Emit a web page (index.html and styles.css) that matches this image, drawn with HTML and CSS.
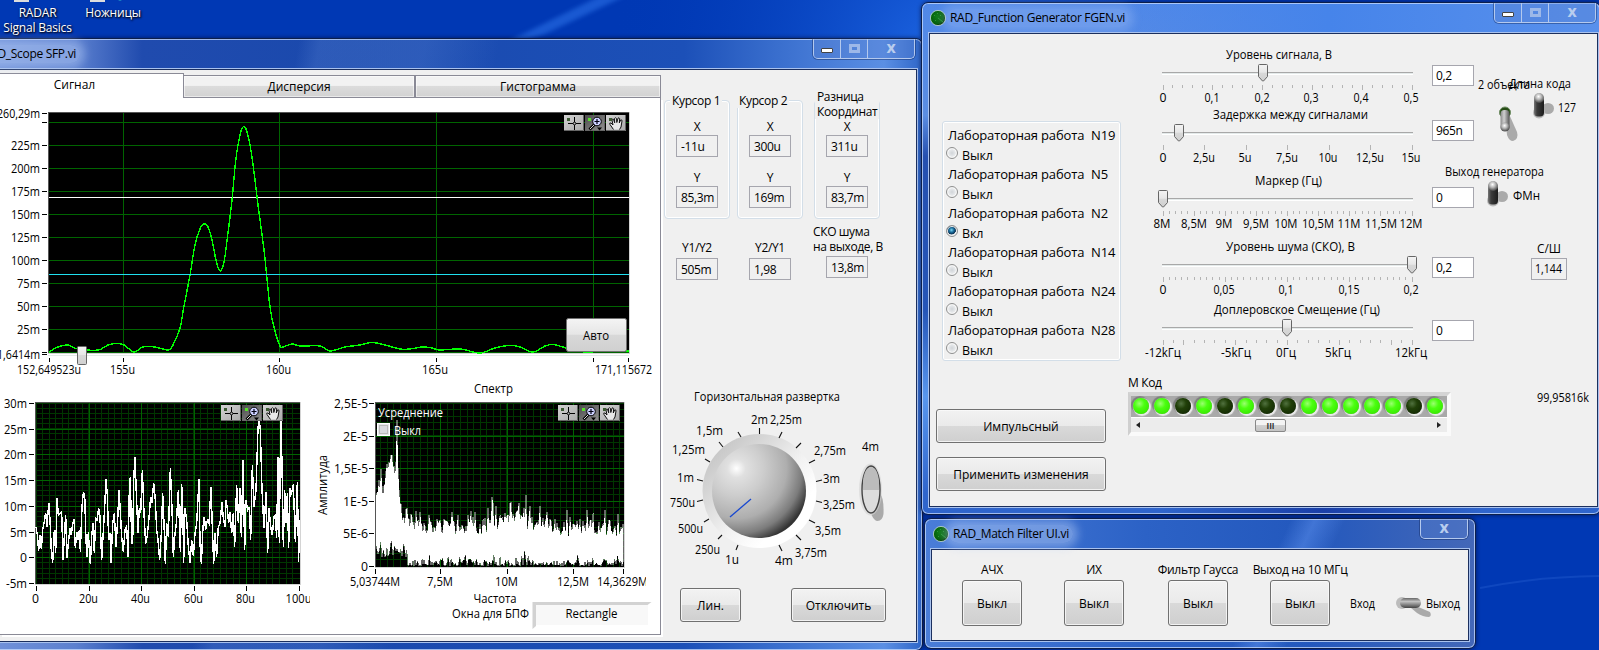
FILE: index.html
```html
<!DOCTYPE html>
<html lang="ru">
<head>
<meta charset="utf-8">
<title>RAD</title>
<link rel="stylesheet" href="styles.css">
</head>
<body>
<svg class="wallpaper" viewBox="0 0 1599 650" aria-hidden="true">
  <defs>
    <radialGradient id="glow" gradientUnits="userSpaceOnUse" cx="950" cy="60" r="340"><stop offset="0" stop-color="#2069e6"/><stop offset="1" stop-color="#0038b5" stop-opacity="0"/></radialGradient>
    <filter id="soft" x="-20%" y="-50%" width="140%" height="200%"><feGaussianBlur stdDeviation="2"/></filter>
    <linearGradient id="btn" x2="0" y2="1"><stop offset="0" stop-color="#f4f4f4"/><stop offset=".48" stop-color="#e6e6e6"/><stop offset=".5" stop-color="#d8d8d8"/><stop offset="1" stop-color="#d0d0d0"/></linearGradient>
    <linearGradient id="toolUp" x2="1" y2="1"><stop offset="0" stop-color="#d2d2d2"/><stop offset="1" stop-color="#aaa"/></linearGradient>
    <linearGradient id="toolDown" x2="1" y2="1"><stop offset="0" stop-color="#4c4c4c"/><stop offset="1" stop-color="#929292"/></linearGradient>
    <radialGradient id="knob" cx=".26" cy=".26" r=".82"><stop offset="0" stop-color="#fff"/><stop offset=".12" stop-color="#e0e0e0"/><stop offset=".35" stop-color="#cdcdcd"/><stop offset=".65" stop-color="#aeaeae"/><stop offset=".85" stop-color="#7c7c7c"/><stop offset="1" stop-color="#333"/></radialGradient>
    <linearGradient id="bezel" x1=".1" y1=".1" x2=".9" y2=".9"><stop offset="0" stop-color="#c4c4c4"/><stop offset=".3" stop-color="#dcdcdc"/><stop offset=".55" stop-color="#f2f2f2"/><stop offset=".8" stop-color="#fff"/></linearGradient>
    <linearGradient id="rod" x2="1"><stop offset="0" stop-color="#777"/><stop offset=".3" stop-color="#3c3c3c"/><stop offset="1" stop-color="#1c1c1c"/></linearGradient>
    <linearGradient id="rodLight" x2="1"><stop offset="0" stop-color="#8a8a8a"/><stop offset=".4" stop-color="#d0d0d0"/><stop offset="1" stop-color="#555"/></linearGradient>
    <linearGradient id="rodSide" x2="0" y2="1"><stop offset="0" stop-color="#666"/><stop offset=".35" stop-color="#c0c0c0"/><stop offset="1" stop-color="#444"/></linearGradient>
    <radialGradient id="ball" cx=".45" cy=".35" r=".6"><stop offset="0" stop-color="#fff"/><stop offset=".5" stop-color="#b5b5b5"/><stop offset="1" stop-color="#555"/></radialGradient>
    <radialGradient id="radar" cx=".4" cy=".4" r=".6"><stop offset="0" stop-color="#0b7a14"/><stop offset=".8" stop-color="#045c0a"/><stop offset="1" stop-color="#022c05"/></radialGradient>
  </defs>
  <rect width="1599" height="650" fill="#0038b4"/>
  <rect width="1599" height="650" fill="url(#glow)"/>
  <path d="M470 60 545 34 625 -4 600 -4Z" fill="#2f74ea" opacity=".55" filter="url(#soft)"/>
  <path d="M1480 588q60-12 125-12" fill="none" stroke="#2660d0" stroke-width="2" opacity=".4"/>
  <rect x="14" y="-4" width="15" height="6" fill="#ddd"/><rect x="90" y="-4" width="15" height="6" fill="#ddd"/><path d="M116 -1h8l-4 2z" fill="#1d8fc4"/>
</svg>

<div class="shortcuts">
  <div class="shortcut first">RADAR<br>Signal Basics</div>
  <div class="shortcut">Ножницы</div>
</div>

<section class="window scope">
  <header class="titlebar"><span class="title">RAD_Scope SFP.vi</span>
    <div class="caption"><i class="cap min"></i><i class="cap max"></i><i class="cap close">x</i></div>
  </header>
  <div class="client scope-client">
    <div class="tabs">
      <nav class="tabbar"><span class="tab active">Сигнал</span><span class="tab second">Дисперсия</span><span class="tab third">Гистограмма</span></nav>
      <div class="page">
        <svg id="signal" viewBox="0 98 660 280" width="660" height="280"></svg>
        <div class="lower">
          <svg id="noise" viewBox="0 378 310 256" width="310" height="256"></svg>
          <svg id="spectrum" viewBox="310 378 350 256" width="350" height="256"></svg>
        </div>
      </div>
    </div>
    <aside class="readouts">
      <div class="cursors">
        <div class="group"><b class="legend">Курсор 1</b><span class="lbl">X</span><output class="val">-11u</output><span class="lbl low">Y</span><output class="val">85,3m</output></div>
        <div class="group two"><b class="legend">Курсор 2</b><span class="lbl">X</span><output class="val">300u</output><span class="lbl low">Y</span><output class="val">169m</output></div>
        <div class="group three"><b class="legend">Разница<br>Координат</b><span class="lbl">X</span><output class="val">311u</output><span class="lbl low">Y</span><output class="val">83,7m</output></div>
      </div>
      <div class="ratios">
        <div class="ratio"><span class="lbl">Y1/Y2</span><output class="val">505m</output></div>
        <div class="ratio second"><span class="lbl">Y2/Y1</span><output class="val">1,98</output></div>
        <div class="ratio third"><span class="lbl">СКО шума<br>на выходе, В</span><output class="val">13,8m</output></div>
      </div>
      <svg id="dial" viewBox="663 385 252 203" width="252" height="203"></svg>
      <div class="actions"><button class="btn lin">Лин.</button><button class="btn off">Отключить</button></div>
    </aside>
  </div>
</section>

<section class="window fgen">
  <header class="titlebar"><svg class="appicon" viewBox="0 0 16 16"><circle cx="8" cy="8" r="7.6" fill="url(#radar)" stroke="#d8ecd8" stroke-width=".7"/><path d="M8 8l5 4M4 5l1 1M7 3l1 1M5 10l1 1M10 6l1-1" stroke="#2fa03a" stroke-width=".8"/></svg><span class="title">RAD_Function Generator FGEN.vi</span>
    <div class="caption"><i class="cap min"></i><i class="cap max"></i><i class="cap close">x</i></div>
  </header>
  <div class="client fgen-client">
    <div class="labs-col">
      <div class="labs">
        <div class="lab"><span>Лабораторная работа</span><span>N19</span><label><i class="radio"></i>Выкл</label></div>
        <div class="lab"><span>Лабораторная работа</span><span>N5</span><label><i class="radio"></i>Выкл</label></div>
        <div class="lab"><span>Лабораторная работа</span><span>N2</span><label><i class="radio on"></i>Вкл</label></div>
        <div class="lab"><span>Лабораторная работа</span><span>N14</span><label><i class="radio"></i>Выкл</label></div>
        <div class="lab"><span>Лабораторная работа</span><span>N24</span><label><i class="radio"></i>Выкл</label></div>
        <div class="lab"><span>Лабораторная работа</span><span>N28</span><label><i class="radio"></i>Выкл</label></div>
      </div>
      <button class="btn wide">Импульсный</button>
      <button class="btn wide">Применить изменения</button>
    </div>
    <div class="controls">
      <div id="sliders"></div>
      <div class="mcode"><span class="mlabel">М Код</span>
        <div class="array"><div class="leds" id="leds"></div><div class="scroll"><i class="arrow left"></i><i class="thumb">III</i><i class="arrow"></i></div></div>
      </div>
    </div>
    <svg class="switches" id="switches" viewBox="1440 34 156 380" width="156" height="380"></svg>
  </div>
</section>

<section class="window filter">
  <header class="titlebar"><svg class="appicon" viewBox="0 0 16 16"><circle cx="8" cy="8" r="7.6" fill="url(#radar)" stroke="#d8ecd8" stroke-width=".7"/><path d="M8 8l5 4M4 5l1 1M7 3l1 1M5 10l1 1M10 6l1-1" stroke="#2fa03a" stroke-width=".8"/></svg><span class="title">RAD_Match Filter UI.vi</span>
    <div class="caption"><i class="cap close">x</i></div>
  </header>
  <div class="client filter-client">
    <div class="cell"><span class="lbl">АЧХ</span><button class="btn sq">Выкл</button></div>
    <div class="cell"><span class="lbl">ИХ</span><button class="btn sq">Выкл</button></div>
    <div class="cell"><span class="lbl">Фильтр Гаусса</span><button class="btn sq">Выкл</button></div>
    <div class="cell"><span class="lbl">Выход на 10 МГц</span><button class="btn sq">Выкл</button></div>
    <svg id="route" viewBox="1346 580 120 46" width="120" height="46"></svg>
  </div>
</section>
<script src="panel.js"></script>
</body>
</html>
```
FILE: styles.css
```css
*, *::after { box-sizing: border-box; }
body { margin: 0; width: 1599px; height: 650px; overflow: hidden; position: relative; background: #0038b4; color: #000; font: 12px/15px "Open Sans", "Noto Sans", sans-serif; letter-spacing: -.35px; }
svg { display: block; }
svg text { font: 12px "Open Sans", "Noto Sans", sans-serif; letter-spacing: 0; }
i { font-style: normal; }
.wallpaper { position: absolute; inset: 0; width: 1599px; height: 650px; }

.shortcuts { position: absolute; left: 0; top: 5px; display: flex; color: #fff; text-align: center; text-shadow: 1px 1px 2px #000, 0 1px 2px #001a60; }
.shortcut { width: 76px; white-space: nowrap; letter-spacing: -.2px; }
.shortcut.first { width: 75px; }

/* Glass window frames */
.window { position: absolute; border: 1px solid #0d1f4a; border-radius: 7px; box-shadow: inset 0 0 0 1px rgba(200,220,255,.75), 0 0 4px rgba(0,0,30,.6); }
.titlebar { height: 30px; display: flex; align-items: center; position: relative; }
.title { line-height: 16px; padding: 1px 4px; margin-left: 0; letter-spacing: -.3px; white-space: nowrap; border-radius: 9px; background: rgba(190,212,250,.42); box-shadow: 0 0 9px 5px rgba(190,212,250,.42); }
.fgen .title { background: rgba(190,212,250,.25); box-shadow: 0 0 9px 5px rgba(190,212,250,.25); }
.appicon { width: 16px; height: 16px; }
.client { background: #f0f0f0; border: 1px solid #1b2f5e; box-shadow: 0 0 0 1px #a9c2ee; overflow: hidden; }
.caption { position: absolute; top: 0; display: flex; height: 20px; border: 1px solid #b4c9ee; border-top: 0; border-radius: 0 0 5px 5px; box-shadow: 0 0 0 1px rgba(20,45,100,.45); }
.cap { width: 27px; border-right: 1px solid #b4c9ee; position: relative; display: flex; justify-content: center; align-items: center; background: rgba(90,130,210,.35); }
.cap:last-child { border: 0; border-radius: 0 0 4px 4px; }
.cap.close { width: 46px; color: #b9cdee; font: bold 16px/16px "Open Sans", sans-serif; padding-bottom: 3px; }
.cap.min::after { content: ""; width: 12px; height: 5px; background: #fff; border: 1px solid #444; border-radius: 1px; margin-top: 3px; }
.cap.max::after { content: ""; width: 11px; height: 9px; border: 3px solid #9db8e8; margin-top: -1px; }

.scope { left: -30px; top: 38px; width: 953px; height: 613px; background: linear-gradient(100deg, transparent 0 31%, rgba(120,160,230,.2) 33% 43%, transparent 50%), linear-gradient(90deg, #7797dc 0, #5c80cf 11%, #204bae 18%, #1a49ad 40%, #1c50b8 75%, #3a6fce 85%, #5b8fe4 96%, #2f66c8 100%); }
.scope .title { margin-left: 8px; }
.scope .caption { right: 7px; }
.scope-client { margin-left: 29px; width: 917px; height: 573px; margin-top: 0; border-left: 0; display: flex; }
.tabs { width: 663px; padding-top: 3px; }
.tabbar { display: flex; align-items: flex-end; height: 25px; }
.tab { text-align: center; letter-spacing: 0; }
.tab.active { width: 184px; height: 25px; background: #fff; border: solid #8a8a96; border-width: 1px 1px 0 0; padding: 3px 34px 0 0; }
.tab.second, .tab.third { height: 23px; padding-top: 3px; background: linear-gradient(#f2f2f2 45%, #dcdcdc 48%, #d2d2d2); border: 1px solid #8a8a96; box-shadow: inset 0 0 0 1px #fff8; }
.tab.second { width: 231px; border-left: 0; }
.tab.third { width: 246px; }
.page { width: 661px; height: 537px; background: #fff; border-right: 1px solid #8a8a96; border-bottom: 1px solid #8a8a96; box-shadow: 2px 2px 0 #fff; }
.lower { display: flex; }

/* Readouts */
.readouts { width: 252px; }
.cursors { display: flex; height: 149px; padding: 30px 0 0 1px; }
.group { width: 66px; height: 119px; border: 1px solid #d3dee8; border-radius: 4px; box-shadow: inset 0 0 0 1px #fff; display: flex; flex-direction: column; align-items: center; }
.group.two { margin-left: 7px; }
.group.three { margin-left: 11px; width: 66px; }
.legend { font-weight: normal; height: 15px; margin: -8px 0 11px 0; background: #f0f0f0; padding: 0 2px; white-space: nowrap; align-self: flex-start; margin-left: 5px; }
.two .legend { margin-left: -1px; }
.three .legend { height: 30px; margin-top: -12px; margin-bottom: 0; margin-left: 0; }
.lbl { white-space: nowrap; height: 15px; }
.lbl.low { margin-top: 13px; }
.val { display: block; width: 42px; height: 22px; border: 1px solid #a6a6ae; background: #f0f0f0; padding: 3px 0 0 4px; white-space: nowrap; margin-top: 1px; }
.ratios { display: flex; height: 67px; padding: 6px 0 0 13px; align-items: flex-start; }
.ratio { width: 42px; display: flex; flex-direction: column; align-items: center; margin-top: 15px; }
.ratio .val { margin-top: 3px; }
.ratio.second { margin-left: 31px; }
.ratio.third { margin: -1px 0 0 35px; }
.ratio.third .lbl { height: 30px; letter-spacing: -.4px; margin-left: 2px; }
.ratio.third .val { margin-top: 2px; }
#dial { margin-top: 99px; }
.actions { display: flex; padding-left: 17px; gap: 50px; }
.btn { font: inherit; letter-spacing: 0; color: #000; height: 34px; padding: 0; border: 1px solid #707070; border-radius: 3px; background: linear-gradient(#f2f2f2, #eaeaea 49%, #d9d9d9 51%, #cfcfcf); box-shadow: inset 0 0 0 1px #fafafacc; }
.lin { width: 61px; }
.off { width: 95px; }

/* Function generator */
.fgen { left: 921px; top: 2px; width: 680px; height: 513px; background: radial-gradient(circle at 400px 505px, #1a3fa8 0, transparent 160px), linear-gradient(90deg, transparent 30%, #4684ea 60%, #5890ec) 0 0 / 100% 31px no-repeat, linear-gradient(180deg, #5088e8 0, #5b8de2 22%, #2550b0 30%, #2555b8 60%, #5896ee 77%, #2f65cc 96%); }
.fgen .titlebar { padding-left: 8px; }
.fgen .caption { right: 4px; }
.fgen-client { margin-left: 7px; width: 669px; height: 474px; display: flex; position: relative; }
.labs-col { width: 198px; padding: 87px 0 0 6px; }
.labs { margin: 0 0 48px 6px; width: 179px; height: 240px; border: 1px solid #d3dee8; border-radius: 3px; box-shadow: inset 0 0 0 1px #fff; padding: 5px 0 0 5px; }
.lab { height: 39px; display: grid; grid-template-columns: 143px 30px; font-size: 13px; line-height: 17px; letter-spacing: -.15px; white-space: nowrap; align-content: start; }
.lab label { display: flex; grid-column: 1 / 3; line-height: 23px; height: 20px; font-size: 12.5px; letter-spacing: -.1px; }
.radio { width: 12px; height: 12px; border: 1px solid #8e8f8f; border-radius: 50%; margin: 3px 4px 0 -2px; background: radial-gradient(#d0d4d8, #e8eaec 50%, #fff 60%); box-shadow: inset 0 0 0 1px #f4f4f4; }
.radio.on { background: radial-gradient(circle at 45% 40%, #7fd8f5 0, #1a6d9c 28%, #0b2f50 52%, #e8eaec 58%); }
.wide { display: block; width: 170px; margin-bottom: 14px; }
.controls { width: 350px; padding-top: 10px; }
.slider { display: flex; }
.slider svg { overflow: visible; }
.slider .val { background: #fff; height: 21px; flex: none; margin-left: 7px; padding-top: 2px; padding-left: 3px; }
.mcode { height: 70px; margin-top: -1px; }
.mlabel { display: block; height: 17px; }
.array { width: 323px; height: 44px; border: 4px solid; border-color: #d4d4d4 #fafafa #fafafa #cfcfcf; border-width: 4px 4px 4px 3px; }
.leds { display: flex; height: 21px; background: #a9a9a9; padding: 0; overflow: hidden; }
.led { width: 21px; height: 20px; flex: none; display: flex; justify-content: center; align-items: center; }
.led:first-child { margin-left: -1px; }
.led::after { content: ""; width: 16px; height: 16px; border-radius: 50%; background: radial-gradient(circle at 40% 35%, #9bff70 0, #4bff10 35%, #37e800 80%); box-shadow: 1px 1px 1px 1px #ececec, -1px -1px 1px 1px #7d7d7d; }
.led.dark::after { background: radial-gradient(circle at 38% 35%, #51713f 0, #214009 35%, #132a04 80%); }
.scroll { height: 15px; background: #ececec; border-top: 1px solid #fff; display: flex; justify-content: space-between; align-items: center; padding: 0 6px 0 5px; }
.arrow { border: 3px solid transparent; border-left: 4px solid #222; border-right: 0; }
.arrow.left { border-left: 0; border-right: 4px solid #222; }
.thumb { width: 31px; height: 13px; border: 1px solid #888; border-radius: 2px; background: linear-gradient(#f3f3f3 45%, #d0d0d0 50%, #c4c4c4); font-size: 8px; font-weight: bold; line-height: 11px; text-align: center; color: #333; letter-spacing: 0; margin-left: -36px; }
.switches { position: absolute; left: 510px; top: 0; }

/* Match filter */
.filter { left: 924px; top: 518px; width: 552px; height: 131px; background: linear-gradient(115deg, transparent 60%, rgba(110,160,250,.4) 64%, transparent 69%), linear-gradient(90deg, #4a7dd8, #2c62c6 40%, #2358bd 70%, #4468b8); }
.filter .titlebar { padding-left: 8px; }
.filter .caption { right: 7px; }
.filter-client { margin-left: 6px; width: 538px; height: 92px; display: flex; padding: 12px 0 0 30px; }
.cell { display: flex; flex-direction: column; align-items: center; width: 60px; margin-right: 42px; }
.cell:nth-child(2) { margin-right: 44px; }
.cell:nth-child(4) { margin-right: 16px; }
.cell .lbl { height: 18px; }
.cell .lbl:not(:empty) { letter-spacing: -.3px; }
.sq { width: 60px; height: 46px; }
#route { margin-top: 18px; }
```
FILE: panel.js
```javascript
const $ = id => document.getElementById(id);
const range = (a, b, step) => { const r = []; for (let v = a; v <= b + 0.01; v += step) r.push(v); return r; };

// Text whose vertical middle is at y; w is the drawn width
function text(x, y, s, w, anchor = 'start', fill = '#000') {
  return `<text x="${x}" y="${y + 4}" text-anchor="${anchor}" fill="${fill}"${w ? ` textLength="${w}" lengthAdjust="spacingAndGlyphs"` : ''}>${s}</text>`;
}
const line = (x1, y1, x2, y2, c, w = 1) => `<path d="M${x1} ${y1}L${x2} ${y2}" stroke="${c}" stroke-width="${w}" shape-rendering="crispEdges"/>`;
const hline = (x1, x2, y, c) => line(x1, Math.floor(y) + .5, x2, Math.floor(y) + .5, c);
const vline = (x, y1, y2, c) => line(Math.floor(x) + .5, y1, Math.floor(x) + .5, y2, c);

function frame(x, y, w, h) {
  return `<rect x="${x}" y="${y}" width="${w}" height="${h}" fill="#000"/>` + hline(x, x + w, y, '#555') + vline(x, y, y + h, '#555') + vline(x + w, y, y + h + 1, '#d4d4d4') + hline(x, x + w, y + h, '#d4d4d4');
}

function tools(x, y) {
  const cell = (dx, fill, glyph, dot) => `<g transform="translate(${x + dx} ${y})"><rect width="20" height="16" fill="url(#${fill})"/><path d="M0 15.5h19.5V0" fill="none" stroke="#666"/>${glyph}<rect x="3" y="3" width="3" height="3" fill="${dot}"/></g>`;
  return cell(0, 'toolUp', '<path d="M4 8.500h5M12 8.500h5M10.500 2v5M10.500 10v5" stroke="#000"/><circle cx="10.500" cy="8.500" r="1.300" fill="none" stroke="#000"/>', '#3d5c33') +
    cell(21, 'toolDown', '<path d="M9.500 9.500 4.500 14.500" stroke="#000" stroke-width="2.800"/><path d="M9 10 5 14" stroke="#ddd"/><circle cx="12" cy="6.500" r="4.300" fill="#ccd0ff" stroke="#000"/><path d="M12 4v5M9.500 6.500h5" stroke="#001" stroke-width="1.200"/><path d="M12 12.500h5l-2.500 3z"/>', '#58e02c') +
    cell(42, 'toolUp', '<path d="M7.500 14.500 4 9.500Q3 7.500 5 8l2 2L6 5q0-1.500 1.500-.8l1.200 3.600L8.500 3.500q.8-1.500 2 0l.3 4L12 3.200q1.200-1 1.700.5l-.4 4.300 1.300-3q1.500-.7 1.400 1L15 12l-1.500 2.500" fill="#e8e8e8" stroke="#111"/>', '#3d5c33');
}

function smooth(points) {
  let d = `M${points[0]}`;
  for (let i = 0; i < points.length - 1; i++) {
    const p = points[Math.max(i - 1, 0)], a = points[i], b = points[i + 1], q = points[Math.min(i + 2, points.length - 1)];
    d += `C${a[0] + (b[0] - p[0]) / 6} ${a[1] + (b[1] - p[1]) / 6} ${b[0] - (q[0] - a[0]) / 6} ${b[1] - (q[1] - a[1]) / 6} ${b}`;
  }
  return d;
}
const pairs = s => s.trim().split(' ').map(p => p.split(',').map(Number));

// Signal
{
  let g = frame(48, 112, 581, 241);
  range(122, 352, 23).forEach(y => { g += hline(49, 629, y, '#006400'); });
  [123, 279, 436, 593].forEach(x => { g += vline(x, 113, 353, '#006400'); });
  g += hline(49, 629, 197, '#fff');
  const curve = pairs('49,352 58,347 68,345 78,349 98,350 108,345 116,343.5 124,345 134,352 143,347 155,347 168,350 173,345 180,328 184,306 190,275 195,245 200,229 204,224 208,227 212,240 216,260 220,271 224,262 228,233 232,200 236,158 240,135 243,127 246,129 250,145 254,172 258,205 264,250 270,307 275,331 280,346 283,347 292,344 300,346 320,346 330,351 345,347 360,345 372,342.5 385,345 400,349 410,349 422,347 432,348 440,350 460,349 480,353 495,348 510,345.5 520,347 533,352 545,346 553,344.5 563,347 576,351 590,352 610,350 629,351');
  g += `<path d="${smooth(curve)}" fill="none" stroke="#0f0" stroke-width="1.400" shape-rendering="crispEdges"/>` + hline(49, 629, 274, '#20e0f0');
  g += tools(564, 115);
  g += text(40, 114, '260,29m', 43, 'end') + hline(42, 47, 113, '#000') + hline(42, 47, 122, '#000');
  ['225m', '200m', '175m', '150m', '125m', '100m', '75m', '50m', '25m'].forEach((s, i) => { const y = 145 + 23 * i; g += text(40, y + .5, s, s.length > 3 ? 29 : 23, 'end') + hline(42, 47, y, '#000'); });
  g += text(40, 354.5, '1,6414m', 43, 'end') + hline(42, 47, 352, '#000') + hline(42, 47, 354, '#000');
  [49, 123, 279, 436, 593, 628].forEach(x => { g += vline(x, 358, 362, '#000'); });
  g += text(17, 370, '152,649523u', 64) + text(110, 370, '155u', 25) + text(266, 370, '160u', 25) + text(422, 370, '165u', 26) + text(595, 370, '171,115672', 57);
  g += hline(48, 629, 355, '#e4e8e8');
  g += '<rect x="77.500" y="346.500" width="9" height="18" rx="1" fill="url(#btn)" stroke="#666"/>';
  g += '<rect x="566.500" y="318.500" width="60" height="33" rx="2" fill="url(#btn)" stroke="#707070"/>' + text(596, 336, 'Авто', 26, 'middle');
  $('signal').innerHTML = g;
}

// Noise
{
  let g = frame(35, 402, 265, 182);
  range(36, 299, 6.58).forEach(x => { g += vline(x, 403, 584, '#003600'); });
  range(403, 583, 5.16).forEach(y => { g += hline(36, 300, y, '#003600'); });
  [89, 141, 194, 246].forEach(x => { g += vline(x, 403, 584, '#006400'); });
  [429, 454, 480, 506, 532, 557].forEach(y => { g += hline(36, 300, y, '#006400'); });
  const trace = '108,440 112,465 116,512 120,465 124,508 128,450 133,425 137,398 141,440 144,395 147,370 151,440 154,515 158,548 163,450 167,520 171,355 175,405 180,400 185,395 189,540 193,470 197,405 201,535 205,490 210,445 214,465 218,430 222,418 226,505 230,455 234,480 238,450 241,515 246,380 250,338 254,345 258,480 261,532 265,455 268,510 271,553 275,470 279,430 283,520 287,415 291,420 296,385 300,410 305,540 309,470 313,400 318,298 322,345 326,480 330,460 333,550 338,430 343,400 348,500 353,420 357,330 361,395 365,470 370,515 375,450 380,440 384,530 388,330 391,292 395,490 398,490 401,300 405,232 409,340 414,460 418,385 422,400 427,270 432,400 437,492 442,465 447,415 452,350 456,370 461,308 466,360 470,450 474,480 479,540 484,460 488,340 492,430 496,552 500,430 505,470 511,265 516,385 520,530 524,470 529,430 535,330 541,515 545,312 549,420 551,548 555,385 560,420 565,500 570,548 575,480 580,528 585,460 590,430 597,298 600,490 604,552 609,440 613,410 617,450 622,420 627,430 633,322 637,440 641,552 645,460 650,530 655,440 660,430 666,365 670,415 675,440 678,360 682,385 686,430 690,395 695,460 700,400 704,500 710,315 715,430 720,325 724,470 729,240 734,510 738,360 743,390 748,380 752,480 757,255 762,380 768,330 774,145 777,110 781,150 786,330 792,445 798,335 803,520 807,385 812,440 817,465 822,410 826,405 830,475 834,232 838,490 842,110 846,250 850,500 854,330 858,430 862,340 866,505 870,325 874,345 880,312 886,485 892,305 896,545 898,420';
  g += `<polyline transform="translate(0 380) scale(.33333)" points="${trace}" fill="none" stroke="#fff" stroke-width="4.300" shape-rendering="crispEdges"/>` + tools(221, 405);
  ['30m', '25m', '20m', '15m', '10m', '5m', '0', '-5m'].forEach((s, i) => { const y = [403, 429, 454, 480, 506, 532, 557, 583][i]; g += text(27, y + .5, s, [23, 23, 23, 23, 23, 17, 7, 21][i], 'end') + hline(29, 34, y, '#000'); });
  ['0', '20u', '40u', '60u', '80u', '100u'].forEach((s, i) => { const x = [36, 89, 141, 194, 246, 299][i]; g += text(x - .5, 599, s, i === 0 ? 7 : i === 5 ? 26 : 19, 'middle') + vline(x, 586, 591, '#000'); });
  $('noise').innerHTML = g;
}

// Spectrum
{
  let seed = 7;
  const rnd = () => (seed = seed * 16807 % 2147483647) / 2147483647;
  let g = frame(375, 402, 249, 165);
  range(380.6, 623, 6.65).forEach(x => { g += vline(x, 403, 567, '#003600'); });
  range(403, 566, 6.54).forEach(y => { g += hline(376, 624, y, '#003600'); });
  [440, 507, 573].forEach(x => { g += vline(x, 403, 567, '#006400'); });
  [436, 468, 501, 533].forEach(y => { g += hline(376, 624, y, '#006400'); });
  const spikes = { 397: 420, 398: 468, 392: 455, 391: 455, 394: 466, 395: 480, 381: 469, 407: 508, 416: 511, 458: 515, 475: 512, 488: 508, 492: 497, 493: 503, 496: 506, 507: 516, 510: 503, 511: 502, 526: 495, 530: 506, 540: 506, 547: 512, 570: 517 };
  let top = '', bottom = [];
  for (let x = 376; x < 624; x++) {
    let base, spread;
    if (x < 402) { base = [500, 494, 493, 480, 492, 475, 485, 498, 484, 484, 472, 465, 473, 462, 465, 455, 462, 469, 470, 478, 463, 424, 468, 490, 502, 505][x - 376]; spread = 5; }
    else { base = 528 - 7 * Math.exp(-(((x - 515) / 30) ** 2)) - (x < 408 ? 3 : 0); spread = 19; }
    let y = base + (rnd() - .5) * spread;
    if (x >= 402 && rnd() > .86) y -= 9;
    if (spikes[x]) y = spikes[x];
    top += `${x},${y.toFixed(1)} `;
    const r = rnd();
    const b = x < 408 ? 548 + (rnd() - .5) * 22 - (x > 386 && x < 394 ? 2 : 0) : 565.5 - r * r * 11 - (x > 490 && x < 530 && r > .8 ? 6 : 0);
    bottom.unshift(`${x},${b.toFixed(1)}`);
  }
  g += `<polygon points="${top}${bottom.join(' ')}" fill="#fff" stroke="#fff" stroke-width=".4" shape-rendering="crispEdges"/>`;
  g += tools(558, 405) + text(378, 413, 'Усреднение', 65, 'start', '#fff') + '<rect x="377.500" y="423.500" width="12" height="12" fill="#e4e6e8" stroke="#fff"/><rect x="379.500" y="425.500" width="8" height="8" fill="#d8dade" stroke="#bbb"/>' + text(394, 431, 'Выкл', 27, 'start', '#fff');
  ['2,5E-5', '2E-5', '1,5E-5', '1E-5', '5E-6', '0'].forEach((s, i) => { const y = [403, 436, 468, 501, 533, 566][i]; g += text(368, y + .5, s, [34, 25, 34, 25, 25, 7][i], 'end') + hline(369, 374, y, '#000'); });
  [375, 440, 507, 573, 623].forEach(x => { g += vline(x, 569, 574, '#000'); });
  g += text(350, 582, '5,03744M', 50) + text(427, 582, '7,5M', 26) + text(495, 582, '10M', 23) + text(557, 582, '12,5M', 32) + `<svg x="597" y="570" width="49" height="24">${text(0, 12, '14,3629M', 51)}</svg>`;
  g += text(493.5, 389, 'Спектр', 39, 'middle') + text(495, 599, 'Частота', 43, 'middle') + text(452, 614, 'Окна для БПФ', 77);
  g += `<g transform="rotate(-90 323 485)">${text(323, 485, 'Амплитуда', 60, 'middle')}</g>`;
  g += '<path d="M532.500 602h119l-4 3H536v21l-3.500 3z" fill="#d2d2d2"/><path d="M536 605h112v20H536z" fill="#f8f8f8"/>' + text(591.5, 614, 'Rectangle', 52, 'middle');
  $('spectrum').innerHTML = g;
}

// Horizontal sweep dial
{
  let g = text(767, 397, 'Горизонтальная развертка', 146, 'middle');
  g += '<circle cx="759.500" cy="491" r="57" fill="url(#bezel)"/><circle cx="759" cy="491" r="47" fill="url(#knob)"/>';
  // Scale marks, clockwise from 1u to 4m
  [[738, 545, 736, 550], [722, 535, 718, 539], [709, 519, 704, 522], [703, 500, 697, 501.5], [703, 481, 697, 479.5], [710, 462, 705, 459], [723, 447, 719, 442], [741, 437, 738, 432], [759.5, 434, 759.5, 428], [779, 438, 782, 432], [796, 448, 801, 443], [809, 463, 815, 460], [816, 481.5, 822, 480], [816, 501, 822, 502.5], [809, 520, 815, 523], [796, 535, 801, 540], [779, 545, 782, 551]].forEach(([a, b, c, d]) => { g += `<path d="M${a} ${b}L${c} ${d}" stroke="#111" stroke-width="1.100"/>`; });
  g += '<path d="M730 517 751 499" stroke="#1848d0" stroke-width="1.300"/>';
  [['2m', 751, 420, 17], ['2,25m', 770, 420, 32], ['1,5m', 696, 431, 27], ['1,25m', 672, 450, 33], ['1m', 677, 478, 17], ['750u', 670, 503, 25], ['500u', 678, 529, 25], ['250u', 695, 550, 25], ['1u', 725, 560, 14], ['4m', 775, 561, 18], ['3,75m', 795, 553, 32], ['3,5m', 815, 531, 26], ['3,25m', 823, 505, 32], ['3m', 823, 479, 17], ['2,75m', 814, 451, 32], ['4m', 862, 447, 17]].forEach(([s, x, y, w]) => { g += text(x, y, s, w); });
  g += '<path d="M880 494q4 3 3.500 20-1 7-6 7-3 0-6-6z" fill="#aaa"/><ellipse cx="870.500" cy="489.500" rx="11.500" ry="26" fill="#d4d4d4" opacity=".6"/><ellipse cx="871" cy="489.500" rx="9" ry="23.500" fill="#dcdcdc" stroke="#444" stroke-width="1.400"/><path d="M863 490v-8q1-14 8-15 7 1 8 15v8z" fill="#bcbcbc"/>';
  $('dial').innerHTML = g;
}

// Generator sliders
const sliders = [
  { title: ['Уровень сигнала, В', 1226, 106], top: 44, h: 60, thumb: 1263, val: '0,2', dy: 21, minor: 25, major: 5, labels: [['0', 1163, 7], ['0,1', 1212, 15], ['0,2', 1262, 15], ['0,3', 1311, 15], ['0,4', 1361, 15], ['0,5', 1411, 15]] },
  { title: ['Задержка между сигналами', 1213, 155], top: 104, h: 66, thumb: 1179, val: '965n', dy: 16, minor: 6, major: 1, labels: [['0', 1163, 7], ['2,5u', 1204, 22], ['5u', 1245, 13], ['7,5u', 1287, 22], ['10u', 1328, 19], ['12,5u', 1370, 28], ['15u', 1411, 19]] },
  { title: ['Маркер (Гц)', 1255, 67], top: 170, h: 66, thumb: 1163, val: '0', dy: 17, minor: 40, major: 5, labels: [['8M', 1162, 17], ['8,5M', 1194, 26], ['9M', 1224, 17], ['9,5M', 1256, 26], ['10M', 1286, 23], ['10,5M', 1318, 32], ['11M', 1349, 23], ['11,5M', 1381, 32], ['12M', 1411, 23]] },
  { title: ['Уровень шума (СКО), В', 1226, 129], top: 236, h: 63, thumb: 1412, val: '0,2', dy: 21, minor: 40, major: 10, labels: [['0', 1163, 7], ['0,05', 1224, 21], ['0,1', 1286, 15], ['0,15', 1349, 21], ['0,2', 1411, 15]] },
  { title: ['Доплеровское Смещение (Гц)', 1214, 166], top: 299, h: 77, thumb: 1287, val: '0', dy: 21, marks: [0, 2, 7, 12, 17, 22, 24], minor: 24, labels: [['-12kГц', 1163, 36], ['-5kГц', 1236, 30], ['0Гц', 1286, 20], ['5kГц', 1338, 26], ['12kГц', 1411, 32]] }
];
$('sliders').innerHTML = sliders.map(s => {
  const c = s.top + 11;
  let g = text(s.title[1], c, s.title[0], s.title[2]);
  g += hline(1162, 1413, c + 17, '#a8a8a8') + hline(1162, 1413, c + 18, '#e4eaea') + hline(1162, 1413, c + 19, '#fff');
  for (let i = 0; i <= s.minor; i++) {
    const big = s.marks ? s.marks.includes(i) : i % s.major === 0;
    g += vline(1163 + 249 * i / s.minor, c + 30, c + (big ? 35 : 33), '#b4b4b4');
  }
  s.labels.forEach(([t, x, w]) => { g += text(x, c + 43, t, w, 'middle'); });
  g += `<path transform="translate(${s.thumb - 5} ${c + 9})" d="M.5 1.500q0-1 1-1h7q1 0 1 1v11l-4 4.500h-1l-4-4.500z" fill="url(#btn)" stroke="#666"/>`;
  return `<div class="slider" style="height:${s.h}px"><svg width="297" height="${s.h}" viewBox="1128 ${s.top} 297 ${s.h}">${g}</svg><output class="val" style="margin-top:${s.dy}px">${s.val}</output></div>`;
}).join('');

$('leds').innerHTML = [...'110101001111101'].map(v => `<i class="led${v === '1' ? '' : ' dark'}"></i>`).join('');

// Toggle switches
const toggleUp = (x, y) => `<g transform="translate(${x} ${y})"><ellipse cx="9" cy="3" rx="6" ry="5.500" fill="#aaa"/><circle cx="0" cy="7" r="6" fill="#bbb"/><rect x="-5" y="-8" width="10" height="19" rx="4" fill="url(#rod)"/><circle cx="0" cy="-7.500" r="5" fill="url(#ball)"/></g>`;
{
  let g = text(1478, 84.5, '2 объекта', 52) + text(1509, 83.5, 'Длина кода', 62);
  g += '<path d="M1505 112l4 2 8 18q2 7-4 9-4 0-6-6z" fill="#aaa"/><circle cx="1505" cy="112.500" r="5.500" fill="#274d16" stroke="#6b8a5f"/><rect x="1500.500" y="110" width="9" height="21" rx="4" fill="url(#rodLight)"/><circle cx="1505" cy="127" r="4.500" fill="url(#ball)"/>';
  g += toggleUp(1539, 105.5) + text(1558, 108, '127', 18) + text(1445, 171.5, 'Выход генератора', 99) + toggleUp(1493, 193.5) + text(1513, 196, 'ФМн', 27);
  g += text(1537, 249, 'С/Ш', 24) + '<rect x="1531.500" y="258.500" width="35" height="21" fill="none" stroke="#a6a6ae"/>' + text(1535, 269, '1,144', 27) + text(1537, 398, '99,95816k', 52);
  $('switches').innerHTML = g;
  $('route').innerHTML = text(1350, 604, 'Вход', 25) + '<path d="M1404 602l12 4 14 6q2 4-1 5-6 0-12-4z" fill="#aaa"/><circle cx="1402" cy="603" r="6" fill="#bcbcbc"/><rect x="1400" y="598" width="21" height="10" rx="5" fill="url(#rodSide)"/>' + text(1426, 604, 'Выход', 34);
}
```
